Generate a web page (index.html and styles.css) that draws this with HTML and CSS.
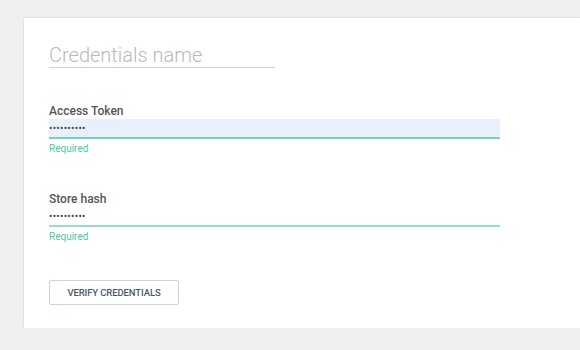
FILE: index.html
```html
<!DOCTYPE html>
<html lang="en">
<head>
    <meta charset="UTF-8">
    <title>Credentials</title>
    <link rel="stylesheet" href="styles.css">
</head>
<body>
    <div class="card">
        <input class="name-input" type="text" placeholder="Credentials name">

        <div class="field field-first">
            <label for="accessToken">Access Token</label>
            <input id="accessToken" class="secret autofilled" type="password" value="1234567890">
            <div class="hint">Required</div>
        </div>

        <div class="field">
            <label for="storeHash">Store hash</label>
            <input id="storeHash" class="secret" type="password" value="abcdefghij">
            <div class="hint">Required</div>
        </div>

        <button class="verify">VERIFY CREDENTIALS</button>
    </div>
</body>
</html>
```

FILE: styles.css
```css
body {
    margin: 0;
    padding: 18px 0 0 24px;
    background: #efefef;
    font-family: Roboto, "Liberation Sans", sans-serif;
    overflow: hidden;
}

.card {
    height: 262px;
    padding: 24px 25px;
    background: white;
    box-shadow: 0 0 2px rgba(0,0,0,0.15);
}

.name-input {
    display: block;
    box-sizing: content-box;
    width: 226px;
    height: 25px;
    padding: 0;
    border: none;
    border-bottom: 1px solid #d0d0d0;
    font-family: Roboto, sans-serif;
    font-size: 20px;
    font-weight: 300;
    color: #333;
    outline: none;
}

.name-input::placeholder {
    color: #b9b9b9;
}

.field {
    margin-top: 37px;
}

.field-first {
    margin-top: 36px;
}

label {
    display: block;
    font-size: 12px;
    line-height: 14px;
    font-weight: 500;
    color: #555;
    margin-bottom: 1px;
}

.secret {
    display: block;
    box-sizing: content-box;
    width: 451px;
    height: 18px;
    padding: 0;
    border: none;
    border-bottom: 2px solid #74d3bd;
    background: white;
    font-family: Roboto, sans-serif;
    font-size: 10px;
    letter-spacing: 0.3px;
    color: #444;
    outline: none;
}

.secret.autofilled {
    background: #e8f0fe;
}

#storeHash {
    border-bottom-color: #97dfcd;
}

.hint {
    margin-top: 4px;
    font-size: 10px;
    line-height: 12px;
    color: #4fc9a0;
}

.verify {
    display: block;
    margin-top: 37px;
    width: 130px;
    height: 25px;
    padding: 0;
    background: white;
    border: 1px solid #c7d5de;
    border-radius: 2px;
    font-family: Roboto, sans-serif;
    font-size: 9.5px;
    font-weight: 500;
    letter-spacing: -0.1px;
    color: #4b5966;
    cursor: pointer;
}
```
